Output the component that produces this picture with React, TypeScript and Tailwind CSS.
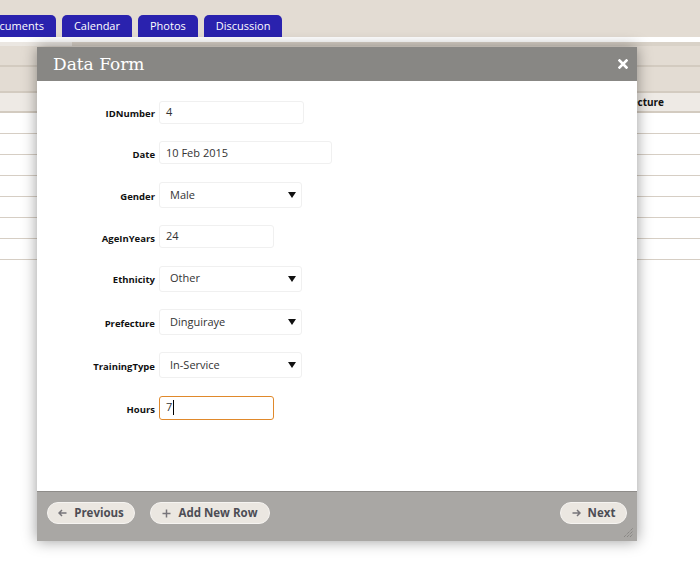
import React from 'react';

const fields = [
  { label: 'IDNumber', value: '4', kind: 'text', width: 'w-[145px]' },
  { label: 'Date', value: '10 Feb 2015', kind: 'text', width: 'w-[173px]' },
  { label: 'Gender', value: 'Male', kind: 'select', width: 'w-[143px]' },
  { label: 'AgeInYears', value: '24', kind: 'text', width: 'w-[115px]' },
  { label: 'Ethnicity', value: 'Other', kind: 'select', width: 'w-[143px]' },
  { label: 'Prefecture', value: 'Dinguiraye', kind: 'select', width: 'w-[143px]' },
  { label: 'TrainingType', value: 'In-Service', kind: 'select', width: 'w-[143px]' },
  { label: 'Hours', value: '7', kind: 'focus', width: 'w-[115px]' },
];

const tabs = ['Documents', 'Calendar', 'Photos', 'Discussion'];

function Field({ label, value, kind, width }: { label: string; value: string; kind: string; width: string }) {
  return (
    <div className="flex items-center">
      <div className="w-[122px] pt-[4px] pr-[4px] text-right text-[9.5px] font-bold text-[#111]">{label}</div>
      {kind === 'select' ? (
        <div className={`${width} h-[26px] flex items-center justify-between pl-[10px] pr-[5px] border border-[#f0f0f0] rounded-[3px] bg-white text-[11px] text-[#333]`}>
          <span>{value}</span>
          <svg width="8" height="8" viewBox="0 0 8 8">
            <path d="M0 1 L8 1 L4 7 Z" fill="#111" />
          </svg>
        </div>
      ) : kind === 'focus' ? (
        <div className={`${width} h-[24px] flex items-center pl-[6px] border border-[#e0892b] rounded-[3px] bg-white text-[11px] text-[#333]`}>
          <span>{value}</span>
          <span className="w-px h-[15px] bg-black ml-px" />
        </div>
      ) : (
        <div className={`${width} h-[23px] flex items-center pl-[6px] border border-[#f0f0f0] rounded-[3px] bg-white text-[11px] text-[#333]`}>
          {value}
        </div>
      )}
    </div>
  );
}

function FooterButton({ icon, label, width }: { icon: React.ReactNode; label: string; width: string }) {
  return (
    <button className={`${width} h-[22px] flex items-center justify-center gap-[7px] rounded-full bg-[#ebe7e1] border border-[#f6f4f1] text-[11.5px] font-bold text-[#4d4d55]`}>
      {icon}
      <span>{label}</span>
    </button>
  );
}

export default function App() {
  return (
    <div className="relative w-[700px] h-[578px] overflow-hidden bg-white" style={{ fontFamily: '"Open Sans", "Noto Sans", sans-serif' }}>
      {/* page behind the dialog */}
      <div className="h-[37px] bg-[#e3dcd3] flex items-end overflow-hidden">
        <div className="flex gap-[6px] -ml-[27px]">
          {tabs.map((t) => (
            <div key={t} className="h-[22px] px-[12px] flex items-center rounded-t-[5px] bg-[#2a22ae] text-white text-[11px]">
              {t}
            </div>
          ))}
        </div>
      </div>
      <div className="h-[5px] bg-white" />
      <div className="flex h-[4px]">
        <div className="w-[72px] bg-[#ebe7e2]" />
        <div className="flex-1 bg-[#d9d2c8]" />
      </div>
      <div className="h-[21px] bg-[#e3dcd3] border-b-2 border-[#d3cbc0]" />
      <div className="h-[26px] bg-[#e3dcd3] border-b-2 border-[#d3cbc0]" />
      <div className="h-[20px] bg-[#eeeae5] border-b-2 border-[#d3cbc0] flex items-center pl-[611px] text-[10px] font-bold text-[#111]">
        Prefecture
      </div>
      {[0, 1, 2, 3, 4, 5, 6].map((i) => (
        <div key={i} className="h-[21px] bg-white border-b border-[#d6cec4]" />
      ))}

      {/* dialog */}
      <div className="absolute left-[37px] top-[47px] w-[600px] h-[494px] flex flex-col bg-white shadow-[0_0_14px_rgba(0,0,0,0.4)]">
        <div className="h-[34px] shrink-0 bg-[#888784] flex items-center justify-between pl-[16px] pr-[9px]">
          <span className="pt-[2px] text-white text-[17px]" style={{ fontFamily: '"DejaVu Serif", serif' }}>Data Form</span>
          <svg width="10" height="10" viewBox="0 0 10 10">
            <path d="M1.5 1.5 L8.5 8.5 M8.5 1.5 L1.5 8.5" stroke="white" strokeWidth="2.6" strokeLinecap="square" />
          </svg>
        </div>
        <div className="flex-1 pt-[20px] flex flex-col gap-[17.4px]">
          {fields.map((f) => (
            <Field key={f.label} {...f} />
          ))}
        </div>
        <div className="relative h-[50px] shrink-0 bg-[#a9a7a4] border-t border-[#8e8c89] flex items-start justify-between pt-[10px] px-[10px]">
          <div className="flex gap-[15px]">
            <FooterButton
              width="w-[88px]"
              label="Previous"
              icon={
                <svg width="9" height="8" viewBox="0 0 9 8">
                  <path d="M1 4 H8.5 M4 1 L1 4 L4 7" stroke="#77757a" strokeWidth="1.5" fill="none" />
                </svg>
              }
            />
            <FooterButton
              width="w-[120px]"
              label="Add New Row"
              icon={
                <svg width="9" height="9" viewBox="0 0 9 9">
                  <path d="M4.5 0.5 V8.5 M0.5 4.5 H8.5" stroke="#77757a" strokeWidth="1.5" />
                </svg>
              }
            />
          </div>
          <FooterButton
            width="w-[67px]"
            label="Next"
            icon={
              <svg width="9" height="8" viewBox="0 0 9 8">
                <path d="M0.5 4 H8 M5 1 L8 4 L5 7" stroke="#77757a" strokeWidth="1.5" fill="none" />
              </svg>
            }
          />
          <svg className="absolute right-[3px] bottom-[3px]" width="11" height="11" viewBox="0 0 11 11">
            <path d="M1 10 L10 1 M4 10 L10 4 M7 10 L10 7" stroke="#7d7b78" strokeWidth="1" strokeDasharray="1 1" />
          </svg>
        </div>
      </div>
    </div>
  );
}
